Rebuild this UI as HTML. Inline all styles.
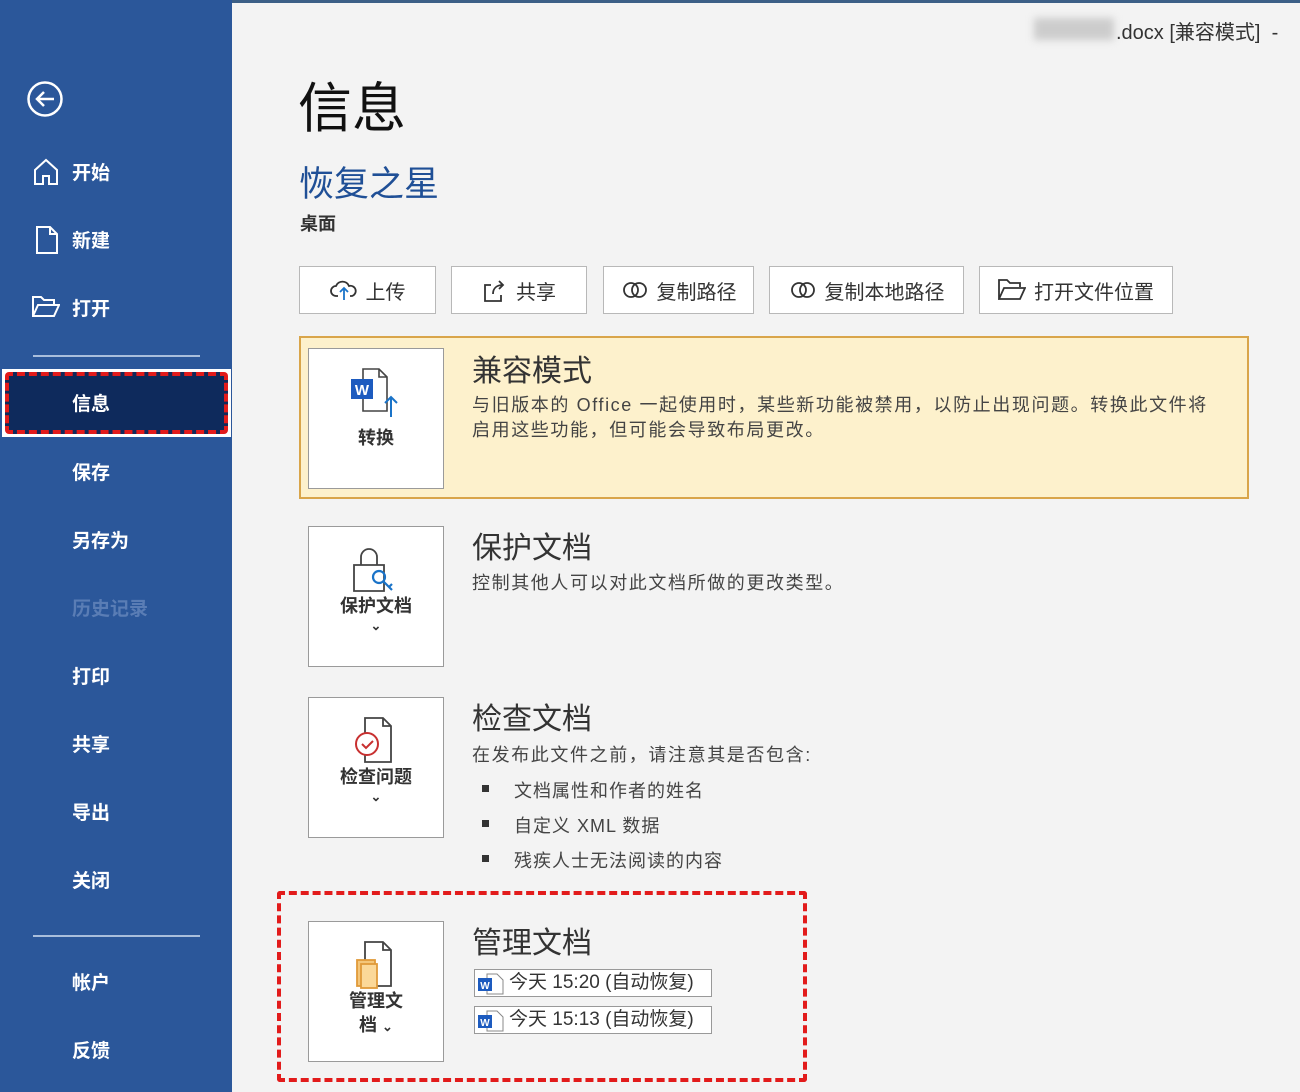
<!DOCTYPE html>
<html><head><meta charset="utf-8"><style>
*{margin:0;padding:0;box-sizing:border-box}
body{width:1300px;height:1092px;overflow:hidden;background:#f3f3f3;font-family:"Liberation Sans","Noto Sans CJK SC",sans-serif;position:relative;color:#222}
.sb{position:absolute;left:0;top:0;width:232px;height:1092px;background:#2b579a;color:#fff}
.sb .it{position:absolute;left:72px;font-size:19px;font-weight:bold}
.a{position:absolute}
.btn{position:absolute;top:266px;height:48px;background:#fff;border:1px solid #b8b8b8;font-size:20px;display:flex;align-items:center;justify-content:center;gap:8px;color:#333}
.box{position:absolute;left:308px;width:136px;background:#fff;border:1px solid #9a9a9a;text-align:center;font-size:18px;font-weight:bold;color:#333}
.h{position:absolute;left:472px;font-size:30px;color:#333}
.t{position:absolute;left:472px;font-size:18px;color:#444;line-height:25px;letter-spacing:1.6px}
.li{position:absolute;left:482px;font-size:18px;color:#444;letter-spacing:1px}
.li:before{content:"";position:absolute;left:0;top:8px;width:7px;height:7px;background:#333}
.li span{margin-left:32px}
.rec{position:absolute;left:474px;width:238px;height:28px;border:1px solid #999;background:#fff;font-size:19px;color:#333;padding-left:34px;line-height:26px}
</style></head><body>
<div class="sb">
 <svg class="a" style="left:26px;top:80px" width="40" height="40" viewBox="0 0 40 40" fill="none" stroke="#fff" stroke-width="2.5"><circle cx="19" cy="19" r="16.5"/><path d="M28 19H11M18 12l-7 7 7 7"/></svg>
 <svg class="a" style="left:33px;top:158px" width="26" height="28" viewBox="0 0 26 28" fill="none" stroke="#fff" stroke-width="2"><path d="M2 12L13 2l11 10v14h-8v-8h-6v8H2z"/></svg>
 <div class="it" style="top:158px">开始</div>
 <svg class="a" style="left:36px;top:226px" width="22" height="28" viewBox="0 0 22 28" fill="none" stroke="#fff" stroke-width="2"><path d="M1 1h13l7 7v19H1zM14 1v7h7"/></svg>
 <div class="it" style="top:226px">新建</div>
 <svg class="a" style="left:32px;top:296px" width="28" height="22" viewBox="0 0 28 22" fill="none" stroke="#fff" stroke-width="2"><path d="M1 20V1h8l3 3h10v4M1 20l5-11h21l-5 11z"/></svg>
 <div class="it" style="top:294px">打开</div>
 <div class="a" style="left:33px;top:355px;width:167px;height:2px;background:#a9bedc"></div>
 <div class="a" style="left:2px;top:369px;width:229px;height:68px;background:#fff"></div>
 <div class="a" style="left:5px;top:372px;width:223px;height:62px;background:#0e2a5c;border:4px dashed #e21b1b;border-radius:4px"></div>
 <div class="it" style="top:389px">信息</div>
 <div class="it" style="top:458px">保存</div>
 <div class="it" style="top:526px">另存为</div>
 <div class="it" style="top:594px;color:#5a7db5">历史记录</div>
 <div class="it" style="top:662px">打印</div>
 <div class="it" style="top:730px">共享</div>
 <div class="it" style="top:798px">导出</div>
 <div class="it" style="top:866px">关闭</div>
 <div class="a" style="left:33px;top:935px;width:167px;height:2px;background:#a9bedc"></div>
 <div class="it" style="top:968px">帐户</div>
 <div class="it" style="top:1036px">反馈</div>
</div>
<div class="a" style="left:232px;top:0;width:1068px;height:3px;background:#3c5f86"></div>
<div class="a" style="left:1034px;top:18px;width:80px;height:22px;background:#ccc;filter:blur(4px)"></div>
<div class="a" style="left:1116px;top:16px;font-size:20px;color:#333">.docx [兼容模式] &nbsp;-</div>
<div class="a" style="left:298px;top:64px;font-size:54px;color:#111">信息</div>
<div class="a" style="left:299px;top:156px;font-size:35px;color:#1f4f96">恢复之星</div>
<div class="a" style="left:300px;top:210px;font-size:18px;font-weight:bold;color:#333">桌面</div>
<div class="btn" style="left:299px;width:137px"><svg width="28" height="24" viewBox="0 0 28 24" fill="none" stroke="#333" stroke-width="1.8"><path d="M8 18H6a5 5 0 010-10 7 7 0 0113 0 5 5 0 013 10h-2"/><path d="M14 22V11M10 14l4-4 4 4" stroke="#1a73c8"/></svg>上传</div>
<div class="btn" style="left:451px;width:136px"><svg width="26" height="26" viewBox="0 0 26 26" fill="none" stroke="#333" stroke-width="1.8"><path d="M9 8H3v16h16v-6M11 17c0-6 4-9 10-9M17 4l4 4-4 4"/></svg>共享</div>
<div class="btn" style="left:603px;width:151px"><svg width="28" height="20" viewBox="0 0 28 20" fill="none" stroke="#333" stroke-width="1.8"><circle cx="10" cy="10" r="7"/><circle cx="18" cy="10" r="7"/></svg>复制路径</div>
<div class="btn" style="left:769px;width:195px"><svg width="28" height="20" viewBox="0 0 28 20" fill="none" stroke="#333" stroke-width="1.8"><circle cx="10" cy="10" r="7"/><circle cx="18" cy="10" r="7"/></svg>复制本地路径</div>
<div class="btn" style="left:979px;width:194px"><svg width="28" height="22" viewBox="0 0 28 22" fill="none" stroke="#333" stroke-width="1.8"><path d="M1 20V1h8l3 3h10v4M1 20l5-11h21l-5 11z"/></svg>打开文件位置</div>
<div class="a" style="left:299px;top:336px;width:950px;height:163px;background:#fdf1cc;border:2px solid #d9a54a"></div>
<div class="box" style="top:348px;height:141px">
 <svg style="margin-top:18px" width="54" height="52" viewBox="0 0 54 52" fill="none"><path d="M14 2h16l8 8v34H14z" stroke="#444" stroke-width="1.6"/><path d="M30 2v8h8" stroke="#444" stroke-width="1.6"/><rect x="2" y="12" width="22" height="20" fill="#1d5bbf"/><text x="13" y="28" font-size="15" font-weight="bold" fill="#fff" text-anchor="middle" font-family="Liberation Sans">W</text><path d="M42 50V30M36 36l6-6 6 6" stroke="#1a73c8" stroke-width="2"/></svg>
 <div>转换</div></div>
<div class="h" style="top:346px">兼容模式</div>
<div class="t" style="top:393px">与旧版本的 Office 一起使用时，某些新功能被禁用，以防止出现问题。转换此文件将<br>启用这些功能，但可能会导致布局更改。</div>
<div class="box" style="top:526px;height:141px">
 <svg style="margin-top:18px" width="50" height="50" viewBox="0 0 50 50" fill="none" stroke="#444" stroke-width="1.8"><path d="M10 20v-8a8 8 0 0116 0v8M3 20h30v26H3z"/><circle cx="28" cy="32" r="6" stroke="#1a73c8" stroke-width="2.2"/><path d="M32 36l9 9M38 42l3-3" stroke="#1a73c8" stroke-width="2.2"/></svg>
 <div style="margin-top:-8px">保护文档</div><div style="font-size:13px">⌄</div></div>
<div class="h" style="top:523px">保护文档</div>
<div class="t" style="top:571px">控制其他人可以对此文档所做的更改类型。</div>
<div class="box" style="top:697px;height:141px">
 <svg style="margin-top:18px" width="50" height="50" viewBox="0 0 50 50" fill="none" stroke="#444" stroke-width="1.8"><path d="M14 2h18l8 8v36H14zM32 2v8h8"/><circle cx="16" cy="28" r="11" fill="#fff" stroke="#c83030" stroke-width="2"/><path d="M11 28l4 4 7-7" stroke="#c83030" stroke-width="2"/></svg>
 <div style="margin-top:-8px">检查问题</div><div style="font-size:13px">⌄</div></div>
<div class="h" style="top:694px">检查文档</div>
<div class="t" style="top:743px">在发布此文件之前，请注意其是否包含:</div>
<div class="li" style="top:777px"><span>文档属性和作者的姓名</span></div>
<div class="li" style="top:812px"><span>自定义 XML 数据</span></div>
<div class="li" style="top:847px"><span>残疾人士无法阅读的内容</span></div>
<div class="a" style="left:277px;top:891px;width:530px;height:191px;border:4px dashed #e21b1b;border-radius:3px"></div>
<div class="box" style="top:921px;height:141px">
 <svg style="margin-top:18px" width="50" height="52" viewBox="0 0 50 52" fill="none" stroke="#444" stroke-width="1.8"><path d="M14 2h18l8 8v36H14zM32 2v8h8"/><rect x="6" y="20" width="18" height="26" fill="#f4c67a" stroke="#e09a3a"/><rect x="10" y="24" width="16" height="24" fill="#fbd899" stroke="#e09a3a"/></svg>
 <div style="margin-top:-8px;line-height:24px">管理文<br>档 <span style="font-size:13px">⌄</span></div></div>
<div class="h" style="top:918px">管理文档</div>
<div class="rec" style="top:969px"><svg class="a" style="left:2px;top:3px" width="28" height="22" viewBox="0 0 28 22"><path d="M10 1h10l6 6v14H10z" fill="#fff" stroke="#888"/><rect x="1" y="5" width="14" height="13" fill="#1d5bbf"/><text x="8" y="16" font-size="10" font-weight="bold" fill="#fff" text-anchor="middle" font-family="Liberation Sans">W</text></svg>今天 15:20 (自动恢复)</div>
<div class="rec" style="top:1006px"><svg class="a" style="left:2px;top:3px" width="28" height="22" viewBox="0 0 28 22"><path d="M10 1h10l6 6v14H10z" fill="#fff" stroke="#888"/><rect x="1" y="5" width="14" height="13" fill="#1d5bbf"/><text x="8" y="16" font-size="10" font-weight="bold" fill="#fff" text-anchor="middle" font-family="Liberation Sans">W</text></svg>今天 15:13 (自动恢复)</div>
</body></html>
